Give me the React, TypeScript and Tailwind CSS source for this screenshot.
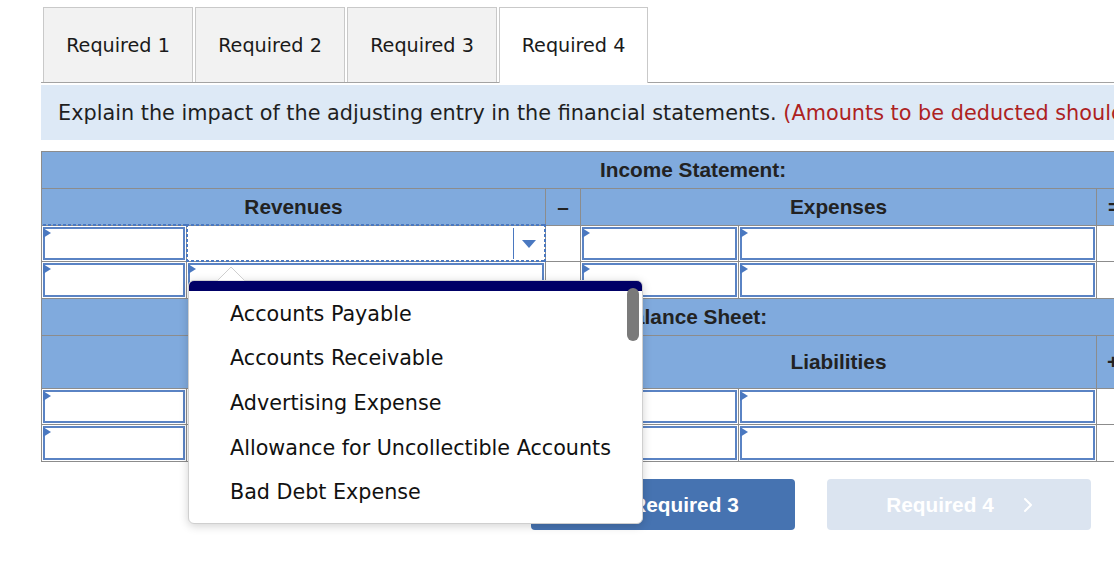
import React from "react";
import { ChevronLeft, ChevronRight } from "lucide-react";

function Box({ className }: { className: string }) {
  return (
    <div className={"p-px border-r border-[#8c8c8c] bg-white " + className}>
      <div className="relative h-full w-full border-2 border-[#5a83c4] bg-white">
        <span className="absolute left-[-2px] top-[-1px] w-0 h-0 border-y-[5px] border-y-transparent border-l-[8px] border-l-[#4a78c0]" />
      </div>
    </div>
  );
}

function Blank({ className }: { className: string }) {
  return <div className={"border-r border-[#8c8c8c] bg-white " + className} />;
}

const items = [
  "Accounts Payable",
  "Accounts Receivable",
  "Advertising Expense",
  "Allowance for Uncollectible Accounts",
  "Bad Debt Expense",
];

export default function App() {
  return (
    <div className="relative w-[1114px] h-[586px] overflow-hidden bg-white font-['DejaVu_Sans',sans-serif] text-[#1a1a1a]">
      {/* Tabs */}
      <div className="ml-[41px] pt-[7px] pl-[2px] flex gap-[2px] border-b border-[#a3a3a3]">
        {["Required 1", "Required 2", "Required 3"].map((t) => (
          <div
            key={t}
            className="w-[150px] h-[75px] flex items-center justify-center pt-[2px] bg-[#f2f2f2] border border-b-0 border-[#c9c9c9] text-[19.2px]"
          >
            {t}
          </div>
        ))}
        <div className="w-[149px] h-[76px] -mb-px flex items-center justify-center pt-[2px] bg-white border border-b-0 border-[#c9c9c9] text-[19.2px]">
          Required 4
        </div>
      </div>

      {/* Instruction band */}
      <div className="ml-[41px] mt-[2px] h-[55px] bg-[#dde9f6] flex items-center pt-[3px] pl-[17px] whitespace-nowrap text-[20.8px] text-[#1f1f1f]">
        Explain the impact of the adjusting entry in the financial statements.&nbsp;
        <span className="text-[#ad221f]">(Amounts to be deducted should be indicated with a minus sign.)</span>
      </div>

      {/* Table */}
      <div className="ml-[41px] mt-[11px] w-[1302px] border-t border-l border-[#8c8c8c] font-['Liberation_Sans',Arial,sans-serif] font-bold text-[20.8px] text-[#222]">
        {/* Income statement header */}
        <div className="h-[37px] bg-[#80aadd] border-b border-[#8c8c8c] flex items-center pl-[558px]">
          Income Statement:
        </div>
        <div className="h-[37px] bg-[#80aadd] border-b border-[#8c8c8c] flex">
          <div className="w-[504px] border-r border-[#8c8c8c] flex items-center justify-center">Revenues</div>
          <div className="w-[35px] border-r border-[#8c8c8c] flex items-center justify-center">–</div>
          <div className="w-[516px] border-r border-[#8c8c8c] flex items-center justify-center">Expenses</div>
          <div className="w-[35px] border-r border-[#8c8c8c] flex items-center pl-[11px]">=</div>
          <div className="w-[211px]" />
        </div>
        {/* Data row 1 */}
        <div className="relative h-[36px] border-b border-[#8c8c8c] flex">
          <div className="absolute left-[1px] top-[-2px] w-[145px] h-[2px] bg-[repeating-linear-gradient(90deg,#4a78c0_0px,#4a78c0_3px,transparent_3px,transparent_5px)]" />
          <Box className="w-[145px]" />
          <div className="relative w-[359px] border-r border-[#8c8c8c] bg-white flex">
            <div className="absolute left-[-1px] right-[-1px] top-[-2px] h-[2px] bg-[repeating-linear-gradient(90deg,#4a78c0_0px,#4a78c0_3px,transparent_3px,transparent_5px)]" />
            <div className="absolute left-[-1px] right-[-1px] bottom-[-1px] h-[2px] bg-[repeating-linear-gradient(90deg,#4a78c0_0px,#4a78c0_3px,transparent_3px,transparent_5px)]" />
            <div className="absolute left-[-1px] top-[-2px] bottom-[-1px] w-[2px] bg-[repeating-linear-gradient(180deg,#4a78c0_0px,#4a78c0_3px,transparent_3px,transparent_5px)]" />
            <div className="absolute right-[-1px] top-[-2px] bottom-[-1px] w-[2px] bg-[repeating-linear-gradient(180deg,#4a78c0_0px,#4a78c0_3px,transparent_3px,transparent_5px)]" />
            <div className="flex-1" />
            <div className="w-[30px] my-[2px] mr-[2px] border-l border-[#4a78c0] flex items-center justify-center">
              <svg width="14" height="8" viewBox="0 0 14 8">
                <polygon points="0,0 14,0 7,8" fill="#4a78c0" />
              </svg>
            </div>
          </div>
          <Blank className="w-[35px]" />
          <Box className="w-[158px]" />
          <Box className="w-[358px]" />
          <Blank className="w-[35px]" />
          <Blank className="w-[211px]" />
        </div>
        {/* Data row 2 */}
        <div className="h-[37px] border-b border-[#8c8c8c] flex">
          <Box className="w-[145px]" />
          <Box className="w-[359px]" />
          <Blank className="w-[35px]" />
          <Box className="w-[158px]" />
          <Box className="w-[358px]" />
          <Blank className="w-[35px]" />
          <Blank className="w-[211px]" />
        </div>

        {/* Balance sheet header */}
        <div className="h-[37px] bg-[#80aadd] border-b border-[#8c8c8c] flex items-center pl-[576px]">
          Balance Sheet:
        </div>
        <div className="h-[53px] bg-[#80aadd] border-b border-[#8c8c8c] flex">
          <div className="w-[504px] border-r border-[#8c8c8c]" />
          <div className="w-[35px] border-r border-[#8c8c8c]" />
          <div className="w-[516px] border-r border-[#8c8c8c] flex items-center justify-center">Liabilities</div>
          <div className="w-[35px] border-r border-[#8c8c8c] flex items-center pl-[10px]">+</div>
          <div className="w-[211px]" />
        </div>
        <div className="h-[36px] border-b border-[#8c8c8c] flex">
          <Box className="w-[145px]" />
          <Box className="w-[359px]" />
          <Blank className="w-[35px]" />
          <Box className="w-[158px]" />
          <Box className="w-[358px]" />
          <Blank className="w-[35px]" />
          <Blank className="w-[211px]" />
        </div>
        <div className="h-[37px] border-b border-[#8c8c8c] flex">
          <Box className="w-[145px]" />
          <Box className="w-[359px]" />
          <Blank className="w-[35px]" />
          <Box className="w-[158px]" />
          <Box className="w-[358px]" />
          <Blank className="w-[35px]" />
          <Blank className="w-[211px]" />
        </div>
      </div>

      {/* Buttons */}
      <div className="mt-[17px] pl-[531px] flex gap-[32px] font-['Liberation_Sans',Arial,sans-serif] font-bold text-[20.8px] text-white">
        <div className="w-[264px] h-[51px] rounded-[4px] bg-[#4673b1] flex items-center justify-center gap-[20px] pt-[1px]">
          <ChevronLeft size={24} strokeWidth={2} />
          <span>Required 3</span>
        </div>
        <div className="w-[264px] h-[51px] rounded-[4px] bg-[#dbe4f0] flex items-center justify-center gap-[22px] pt-[1px] pl-[8px]">
          <span>Required 4</span>
          <ChevronRight size={24} strokeWidth={2} />
        </div>
      </div>

      {/* Dropdown popup */}
      <div className="absolute left-[188px] top-[266px] flex flex-col">
        <svg width="30" height="15" viewBox="0 0 30 15" className="ml-[28px] relative z-10 -mb-[1px]">
          <polygon points="1,15 15,1 29,15" fill="#ffffff" stroke="#cfcfcf" strokeWidth="1" />
        </svg>
        <div className="relative w-[455px] h-[244px] bg-white rounded-[6px] overflow-hidden border border-[#cfcfcf] shadow-[0_2px_10px_rgba(0,0,0,0.18)]">
          <div className="h-[10px] bg-[#000066]" />
          <div className="flex flex-col pt-[1px]">
            {items.map((it) => (
              <div key={it} className="h-[44.6px] flex items-center pl-[41px] text-[20.7px] text-[#111] whitespace-nowrap">
                {it}
              </div>
            ))}
          </div>
          <div className="absolute right-[3px] top-[7px] w-[12px] h-[53px] rounded-full bg-[#7a7a7a]" />
        </div>
      </div>
    </div>
  );
}
